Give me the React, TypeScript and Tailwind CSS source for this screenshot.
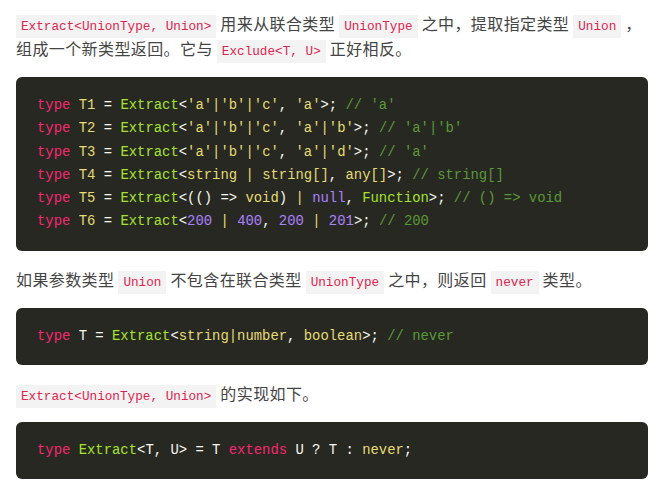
import React from "react";

const K = ({ children }: { children: React.ReactNode }) => <span className="text-[#f92672]">{children}</span>;
const G = ({ children }: { children: React.ReactNode }) => <span className="text-[#a6e22e]">{children}</span>;
const Y = ({ children }: { children: React.ReactNode }) => <span className="text-[#e6db74]">{children}</span>;
const P = ({ children }: { children: React.ReactNode }) => <span className="text-[#ae81ff]">{children}</span>;
const C = ({ children }: { children: React.ReactNode }) => <span className="text-[#5a9a36]">{children}</span>;

const Code = ({ children }: { children: React.ReactNode }) => (
  <code className="bg-[#f3f3f3] text-[#e0234e] px-[5px] py-[4px] text-[12.7px] leading-none tracking-normal align-baseline [font-family:'Liberation_Mono','Noto_Sans_CJK_SC',monospace]">
    {children}
  </code>
);

const Block = ({ children }: { children: React.ReactNode }) => (
  <pre className="w-[632px] rounded-md bg-[#272822] text-[#f8f8f2] pl-[21px] py-[17px] text-[13.9px] leading-[23.3px] tracking-normal [font-family:'Liberation_Mono',monospace] whitespace-pre">
    {children}
  </pre>
);

export default function App() {
  return (
    <div className="bg-white min-h-[501px] w-[667px] px-4 pt-[11px] flex flex-col gap-4 text-[#444] text-[16px] leading-[25px] tracking-[0.4px] [font-family:'Noto_Sans_CJK_SC',sans-serif]">
      <p className="w-[632px]">
        <Code>Extract&lt;UnionType, Union&gt;</Code> 用来从联合类型 <Code>UnionType</Code> 之中，提取指定类型 <Code>Union</Code> ，
        <br />
        组成一个新类型返回。它与 <Code>Exclude&lt;T, U&gt;</Code> 正好相反。
      </p>
      <Block>
        <div>
          <K>type</K> <Y>T1</Y> = <G>Extract</G>&lt;<Y>'a'</Y><Y>|</Y><Y>'b'</Y><Y>|</Y><Y>'c'</Y>, <Y>'a'</Y>&gt;; <C>// 'a'</C>
        </div>
        <div>
          <K>type</K> <Y>T2</Y> = <G>Extract</G>&lt;<Y>'a'</Y><Y>|</Y><Y>'b'</Y><Y>|</Y><Y>'c'</Y>, <Y>'a'</Y><Y>|</Y><Y>'b'</Y>&gt;; <C>// 'a'|'b'</C>
        </div>
        <div>
          <K>type</K> <Y>T3</Y> = <G>Extract</G>&lt;<Y>'a'</Y><Y>|</Y><Y>'b'</Y><Y>|</Y><Y>'c'</Y>, <Y>'a'</Y><Y>|</Y><Y>'d'</Y>&gt;; <C>// 'a'</C>
        </div>
        <div>
          <K>type</K> <Y>T4</Y> = <G>Extract</G>&lt;<Y>string</Y> <Y>|</Y> <Y>string[]</Y>, <Y>any[]</Y>&gt;; <C>// string[]</C>
        </div>
        <div>
          <K>type</K> <Y>T5</Y> = <G>Extract</G>&lt;(() =&gt; <Y>void</Y>) <Y>|</Y> <P>null</P>, <G>Function</G>&gt;; <C>// () =&gt; void</C>
        </div>
        <div>
          <K>type</K> <Y>T6</Y> = <G>Extract</G>&lt;<P>200</P> <Y>|</Y> <P>400</P>, <P>200</P> <Y>|</Y> <P>201</P>&gt;; <C>// 200</C>
        </div>
      </Block>
      <p>
        如果参数类型 <Code>Union</Code> 不包含在联合类型 <Code>UnionType</Code> 之中，则返回 <Code>never</Code> 类型。
      </p>
      <Block>
        <div>
          <K>type</K> T = <G>Extract</G>&lt;<Y>string</Y><Y>|</Y><Y>number</Y>, <Y>boolean</Y>&gt;; <C>// never</C>
        </div>
      </Block>
      <p>
        <Code>Extract&lt;UnionType, Union&gt;</Code> 的实现如下。
      </p>
      <Block>
        <div>
          <K>type</K> <G>Extract</G>&lt;T, U&gt; = T <K>extends</K> U ? T : <Y>never</Y>;
        </div>
      </Block>
    </div>
  );
}
